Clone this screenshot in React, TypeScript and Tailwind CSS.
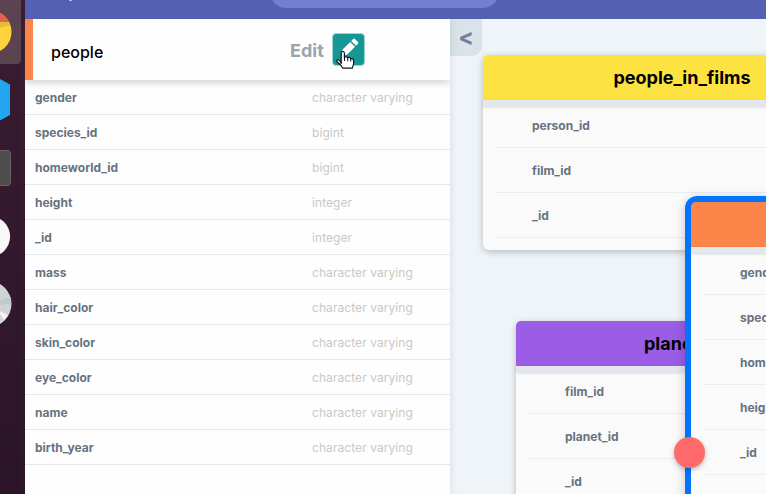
import React from "react";

const columns = [
  ["gender", "character varying"],
  ["species_id", "bigint"],
  ["homeworld_id", "bigint"],
  ["height", "integer"],
  ["_id", "integer"],
  ["mass", "character varying"],
  ["hair_color", "character varying"],
  ["skin_color", "character varying"],
  ["eye_color", "character varying"],
  ["name", "character varying"],
  ["birth_year", "character varying"],
];

function Dock() {
  return (
    <aside className="h-full w-[25px] shrink-0 bg-gradient-to-b from-[#3a1d2f] to-[#2c1429]">
      <svg width="25" height="494" viewBox="0 0 25 494">
        <defs>
          <clipPath id="chrome">
            <circle cx="-10" cy="32" r="21.5" />
          </clipPath>
        </defs>
        <rect x="-10" y="-8" width="31" height="72" rx="4" fill="#5b4450" />
        <g clipPath="url(#chrome)">
          <rect x="-32" y="10" width="44" height="44" fill="#fdd23c" />
          <rect x="-32" y="10" width="44" height="12" fill="#e5604f" />
          <path d="M0 22H12V25L0 28Z" fill="#e8bf34" />
        </g>
        <path d="M0 79L10 84.500V115L0 120.500Z" fill="#23a5f0" />
        <rect x="-10" y="150.500" width="20.500" height="35" rx="3" fill="#4d4d4d" stroke="#686366" />
        <circle cx="-10.300" cy="236.500" r="20.400" fill="#f8f8f8" />
        <circle cx="-11.500" cy="304" r="23" fill="#d0d3d6" />
        <path d="M0 311L8 315L4 320L0 314Z" fill="#f2f2f0" />
        <path d="M0 300L11 297V304L0 305Z" fill="#c2c8cc" />
      </svg>
    </aside>
  );
}

function EditButton() {
  return (
    <button className="relative ml-[8.6px] h-[33px] w-[33px] rounded-[4px] border border-[#9fd6d3] bg-[#159895]">
      <svg className="absolute -left-px -top-px overflow-visible" width="36" height="38" viewBox="0 0 36 38">
        <g transform="translate(22 10) rotate(45)" fill="#fff">
          <path d="M-3.400 -2.200Q-3.400 -3.500 -2.100 -3.500H2.100Q3.400 -3.500 3.400 -2.200V.6H-3.400Z" />
          <path d="M-3.400 2H3.400V13L0 18L-3.400 13Z" />
        </g>
        <path
          d="M9.200 30.500V20.200Q9.200 18.300 10.800 18.300Q12.400 18.300 12.400 20.200V24.700Q13 23.500 14.300 23.800Q15.500 24 15.700 25Q16.500 24 17.700 24.500Q18.600 24.900 18.800 26Q21.300 25 21.600 27.500V30.500Q21.300 32.500 20.200 35.200H10.800L8.600 32Q6 29.800 4.800 28.500Q4.400 26.400 6.800 27Q8.500 28 9.200 30.500Z"
          fill="#fff"
          stroke="#171319"
          strokeWidth="1.200"
          strokeLinejoin="round"
        />
        <path d="M12.500 24.500V28M15.700 25V28.300M18.700 26V28.500" stroke="#171319" strokeWidth="1" />
      </svg>
    </button>
  );
}

function SidePanel() {
  return (
    <section className="relative z-10 flex h-full w-[425px] shrink-0 flex-col bg-[#fefefe] shadow-[0_0_8px_rgba(80,95,110,0.16)]">
      <div className="relative z-10 flex h-[61px] w-full shrink-0 items-center border-l-[8px] border-[#fc8549] bg-[#fefefe] pl-[18px] shadow-[0_2px_8px_rgba(0,0,0,0.2)] [clip-path:inset(0_0_-14px_0)]">
        <h2 className="w-[239px] pt-1 text-[16px] font-medium text-black">people</h2>
        <span className="pt-[2px] text-[18px] font-bold text-[#9ba4ab]">Edit</span>
        <EditButton />
      </div>
      <div className="flex flex-col">
        {columns.map(([name, type]) => (
          <div key={name} className="flex h-[35px] items-center border-b border-[#e2e8f0] pl-[10px] pt-[2px] text-[12px]">
            <span className="w-[277px] font-bold text-[#66727f]">{name}</span>
            <span className="tracking-[0.07px] text-[#c8c8c8]">{type}</span>
          </div>
        ))}
      </div>
    </section>
  );
}

function TableNode({
  title,
  fields,
  place,
  header,
  titleClass,
}: {
  title: string;
  fields: string[];
  place: string;
  header: string;
  titleClass: string;
}) {
  return (
    <article className={`absolute w-[398px] bg-[#fafafa] ${place}`}>
      <div className={`flex h-[45px] items-center rounded-t-[5px] text-[18px] font-bold text-black ${header} ${titleClass}`}>
        {title}
      </div>
      <div className="h-[6px] bg-[#e3e7ee] shadow-[0_1px_3px_rgba(0,0,0,0.14)]" />
      <div className="-mt-[3px] px-3 pb-3">
        {fields.map((field) => (
          <div key={field} className="flex h-[45px] items-center border-b border-[#e9edf0] pl-[37px] pt-[2px] text-[12px] font-bold text-[#66727f]">
            {field}
          </div>
        ))}
      </div>
    </article>
  );
}

export default function App() {
  return (
    <div className="flex h-[494px] w-[766px] overflow-hidden font-['Inter',sans-serif]">
      <Dock />
      <div className="flex min-w-0 flex-1 flex-col">
        <header className="relative z-20 h-[19px] shrink-0 overflow-hidden bg-[#5460b2]">
          <div className="-mt-[24px] ml-[245px] h-[32px] w-[229px] rounded-[16px] bg-[#727fd5]" />
          <span className="absolute -top-[14px] left-[44px] h-[15px] w-[3px] rounded-b bg-[#dfe2f5]" />
        </header>
        <div className="flex min-h-0 flex-1">
          <SidePanel />
          <main className="relative flex-1 overflow-hidden bg-[#eff4f8]">
            <button className="flex h-[37px] w-[32px] items-center justify-center rounded-br-[10px] bg-[#d9e3e9] pb-px text-[23px] font-bold text-[#718096]">
              &lt;
            </button>
            <TableNode
              title="people_in_films"
              fields={["person_id", "film_id", "_id"]}
              place="left-[33px] top-[36px] rounded-[6px] shadow-[0_2px_7px_rgba(0,0,0,0.24)]"
              header="bg-[#fde341]"
              titleClass="justify-center"
            />
            <TableNode
              title="planets_in_films"
              fields={["film_id", "planet_id", "_id"]}
              place="left-[66px] top-[302px] rounded-[6px] shadow-[0_2px_7px_rgba(0,0,0,0.24)]"
              header="bg-[#9b5de5]"
              titleClass="pl-[128px]"
            />
            <TableNode
              title="people"
              fields={["gender", "species_id", "homeworld_id", "height", "_id", "mass"]}
              place="left-[241px] top-[183px] rounded-[6px] shadow-[0_0_0_6px_#0474fd,0_2px_12px_5px_rgba(0,0,0,0.25)]"
              header="bg-[#fc8549]"
              titleClass="justify-center"
            />
            <span className="absolute left-[224px] top-[418px] h-[31px] w-[31px] rounded-full bg-[#ff6b6b] shadow-[0_2px_5px_rgba(0,0,0,0.25)]" />
          </main>
        </div>
      </div>
    </div>
  );
}
